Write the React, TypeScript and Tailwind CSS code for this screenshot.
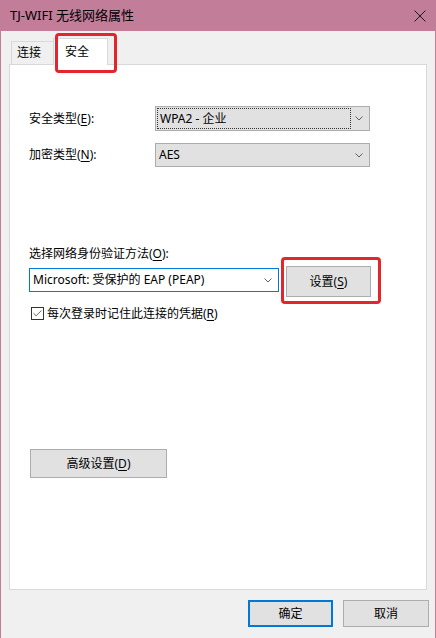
import { Check } from "lucide-react";

const font = { fontFamily: '"Noto Sans", "Noto Sans CJK SC", sans-serif' };

function Chevron() {
  return (
    <svg width="8" height="5" viewBox="0 0 8 5" className="shrink-0">
      <path d="M0.5 0.5 L4 4 L7.5 0.5" fill="none" stroke="#606060" strokeWidth="1" />
    </svg>
  );
}

function U({ children }: { children: string }) {
  return <span className="underline underline-offset-2 decoration-1">{children}</span>;
}

export default function App() {
  return (
    <div
      className="w-[436px] h-[638px] flex flex-col bg-[#f0f0f0] border-l border-r border-[#c27d99] text-black text-[12px] overflow-hidden"
      style={font}
    >
      {/* title bar */}
      <div className="h-[31px] shrink-0 bg-[#c27d99] flex items-center justify-between pl-[9px] pr-[9px]">
        <span className="text-[13px] leading-none">TJ-WIFI 无线网络属性</span>
        <svg width="12" height="12" viewBox="0 0 12 12">
          <path d="M0.5 0.5 L11.5 11.5 M11.5 0.5 L0.5 11.5" stroke="#1a1a1a" strokeWidth="1" />
        </svg>
      </div>

      {/* tabs */}
      <div className="mt-[7px] pl-[8px] pr-[8px] flex items-end h-[26px] shrink-0">
        <div className="ml-[2px] w-[44px] h-[23px] border border-b-0 border-[#d9d9d9] bg-[#f0f0f0] flex items-center pl-[5px] leading-none">
          连接
        </div>
        <div className="relative z-10 -ml-[2px] -mb-px w-[55px] h-[27px] border border-b-0 border-[#d9d9d9] bg-white flex items-center pl-[11px] leading-none">
          安全
          <div className="absolute left-[1px] top-[-6px] w-[62px] h-[40px] border-[3px] border-[#e3262b] rounded-[4px]" />
        </div>
      </div>

      {/* tab panel */}
      <div className="mx-[8px] flex-1 bg-white border border-[#d9d9d9] flex flex-col pl-[19px]">
        <div className="mt-[41px] flex items-center h-[25px]">
          <span className="w-[126px] leading-none">
            安全类型(<U>E</U>):
          </span>
          <div className="w-[215px] h-[25px] bg-[#e1e1e1] border border-[#adadad] flex items-center pr-[6px]">
            <div className="ml-[1px] w-[194px] h-[21px] border border-dotted border-[#333] flex items-center pl-[2px] leading-none">
              WPA2 - 企业
            </div>
            <div className="flex-1" />
            <Chevron />
          </div>
        </div>

        <div className="mt-[12px] flex items-center h-[24px]">
          <span className="w-[126px] leading-none">
            加密类型(<U>N</U>):
          </span>
          <div className="w-[215px] h-[24px] bg-[#e1e1e1] border border-[#adadad] flex items-center justify-between pl-[3px] pr-[6px] leading-none">
            AES
            <Chevron />
          </div>
        </div>

        <div className="mt-[79px] leading-[16px]">
          选择网络身份验证方法(<U>O</U>):
        </div>

        <div className="mt-[4px] flex items-start">
          <div className="mt-[2px] w-[250px] h-[24px] bg-white border border-[#0078d7] flex items-center justify-between pl-[3px] pr-[6px] leading-none">
            Microsoft: 受保护的 EAP (PEAP)
            <Chevron />
          </div>
          <div className="relative ml-[7px]">
            <div className="w-[85px] h-[31px] bg-[#e1e1e1] border border-[#adadad] flex items-center justify-center leading-none">
              设置(<U>S</U>)
            </div>
            <div className="absolute left-[-5px] top-[-9px] w-[100px] h-[47px] border-[3px] border-[#e3262b] rounded-[4px]" />
          </div>
        </div>

        <div className="mt-[10px] ml-[2px] flex items-center gap-[3px]">
          <div className="w-[13px] h-[13px] border border-[#333] bg-white flex items-center justify-center">
            <Check size={11} strokeWidth={1.5} color="#222" />
          </div>
          <span className="leading-none">
            每次登录时记住此连接的凭据(<U>R</U>)
          </span>
        </div>

        <div className="mt-[129px] ml-[1px] w-[137px] h-[29px] bg-[#e1e1e1] border border-[#adadad] flex items-center justify-center leading-none">
          高级设置(<U>D</U>)
        </div>
      </div>

      {/* footer */}
      <div className="h-[48px] shrink-0 flex justify-end items-start pt-[10px] pr-[6px] gap-[10px]">
        <div className="w-[85px] h-[27px] bg-[#e1e1e1] border-2 border-[#0078d7] flex items-center justify-center leading-none">
          确定
        </div>
        <div className="w-[86px] h-[27px] bg-[#e1e1e1] border border-[#adadad] flex items-center justify-center leading-none">
          取消
        </div>
      </div>
    </div>
  );
}
